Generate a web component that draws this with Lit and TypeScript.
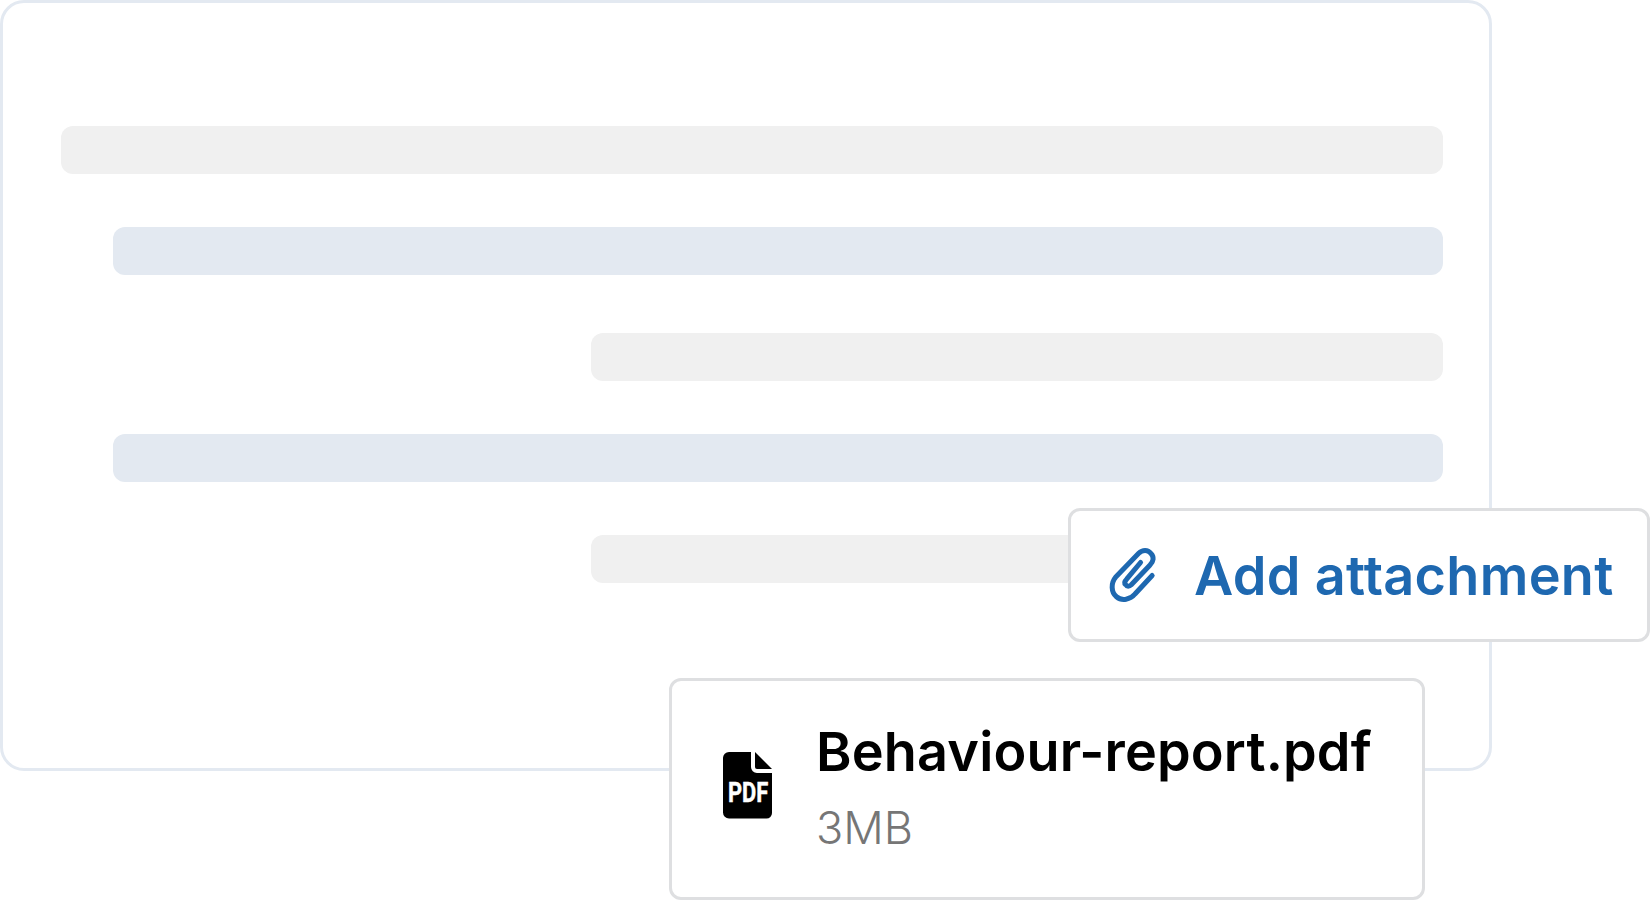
import { LitElement, html, css } from "lit";
import { customElement } from "lit/decorators.js";

@customElement("app-root")
export class AppRoot extends LitElement {
  static styles = css`
    :host {
      display: block;
      width: 1650px;
      height: 901px;
      background: #fff;
      position: relative;
      overflow: hidden;
      font-family: Inter, "Liberation Sans", sans-serif;
    }
    .canvas {
      box-sizing: border-box;
      width: 1492px;
      height: 771px;
      border: 3px solid #e3e9f1;
      border-radius: 24px;
      padding: 123px 46px 0 58px;
      display: flex;
      flex-direction: column;
      align-items: flex-end;
    }
    .bar {
      height: 48px;
      border-radius: 12px;
      flex: none;
    }
    .grey { background: #f0f0f0; }
    .blue { background: #e3e9f1; }
    .w1 { width: 1382px; }
    .w2 { width: 1330px; margin-top: 53px; }
    .w3 { width: 852px; margin-top: 58px; }
    .w4 { width: 1330px; margin-top: 53px; }
    .w5 { width: 852px; margin-top: 53px; }
    .card {
      position: absolute;
      box-sizing: border-box;
      background: #fff;
      border: 3px solid #dedfe1;
      border-radius: 12px;
      display: flex;
      align-items: center;
    }
    .attach {
      left: 1068px;
      top: 508px;
      width: 582px;
      height: 134px;
      padding-left: 38px;
      color: #1e68b0;
      font-size: 54px;
      font-weight: 600;
      gap: 33px;
      letter-spacing: 0.3px;
      white-space: nowrap;
    }
    .file {
      left: 669px;
      top: 678px;
      width: 756px;
      height: 222px;
      padding: 0 0 2px 50px;
      gap: 42px;
    }
    .clip { width: 52px; height: 64px; flex: none; }
    .pdf { width: 52px; height: 70px; flex: none; margin-bottom: 6px; }
    .pdf-label {
      font-family: Roboto, sans-serif;
      font-weight: 700;
      font-size: 28px;
      fill: #fff;
      stroke: #fff;
      stroke-width: 0.5px;
    }
    .meta { display: flex; flex-direction: column; gap: 16px; }
    .name {
      font-size: 54px;
      font-weight: 600;
      line-height: 66px;
      letter-spacing: 0.15px;
      color: #000;
      white-space: nowrap;
      margin-top: -2px;
    }
    .size {
      font-size: 45px;
      font-weight: 300;
      line-height: 54px;
      color: #767676;
    }
  `;

  render() {
    return html`
      <div class="canvas">
        <div class="bar grey w1"></div>
        <div class="bar blue w2"></div>
        <div class="bar grey w3"></div>
        <div class="bar blue w4"></div>
        <div class="bar grey w5"></div>
      </div>
      <div class="card attach">
        <svg class="clip" viewBox="18 8 56 69" fill="none" stroke="#1e68b0" stroke-width="5.400" stroke-linecap="round" stroke-linejoin="round">
          <path d="M64.5 43 L46 63 C41 69 32 71 26 66 C20 61 20 51 25 45 L50 19 C54 15 60 15 63 19 C67 23 66 28 62 32 L42 53 C40 55 37 55 36 53 C34 51 35 49 37 47 L52 29"></path>
        </svg>
        <span>Add attachment</span>
      </div>
      <div class="card file">
        <svg class="pdf" viewBox="12 12 52 70">
          <path d="M19 14 H41 V29 a6 6 0 0 0 6 6 H62 V75 a5.500 5.500 0 0 1 -5.500 5.500 H19 a6 6 0 0 1 -6 -6 V20 a6 6 0 0 1 6 -6 z" fill="#000"></path>
          <path d="M45 14 L62 31 H47 a2 2 0 0 1 -2 -2 z" fill="#000"></path>
          <text class="pdf-label" transform="translate(18 64) scale(0.78 1)">PDF</text>
        </svg>
        <div class="meta">
          <div class="name">Behaviour-report.pdf</div>
          <div class="size">3MB</div>
        </div>
      </div>
    `;
  }
}
